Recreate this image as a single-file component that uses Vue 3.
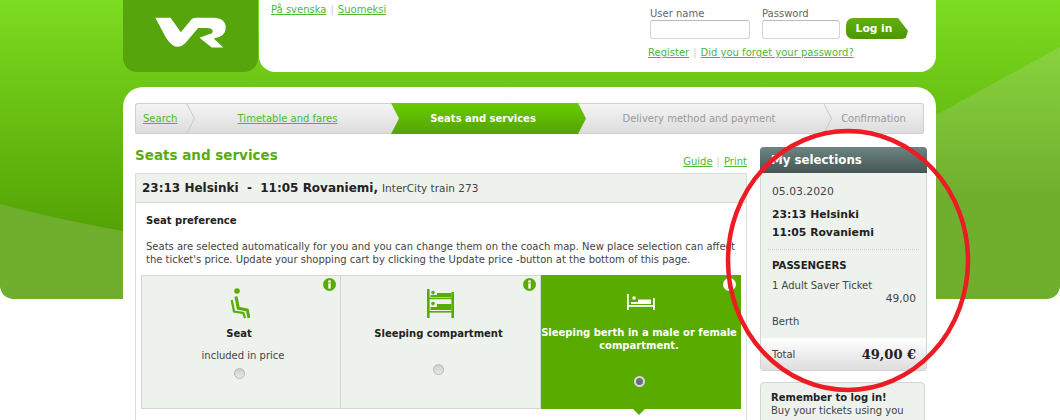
<template>
  <div class="page">
    <!-- green backdrop with the two lighter swooshes -->
    <svg class="backdrop" width="1060" height="300" viewBox="0 0 1060 300">
      <defs>
        <linearGradient id="bgGreen" x1="0" y1="0" x2="0" y2="1">
          <stop offset="0" stop-color="#7cdc20" />
          <stop offset="0.77" stop-color="#54a304" />
          <stop offset="1" stop-color="#54a304" />
        </linearGradient>
        <linearGradient id="bgLight" x1="0" y1="0" x2="0" y2="1">
          <stop offset="0" stop-color="#88d33e" />
          <stop offset="0.6" stop-color="#70ae2e" />
          <stop offset="1" stop-color="#70ae2e" />
        </linearGradient>
      </defs>
      <path d="M0 0 L1060 0 L1060 283 Q1060 299 1044 299 L16 299 Q0 299 0 283 Z" fill="url(#bgGreen)" />
      <path d="M0 204 Q60 220 123 231 L123 299 L16 299 Q0 299 0 283 Z" fill="#70ae2e" />
      <path d="M1060 47 L936 115 L936 299 L1044 299 Q1060 299 1060 283 Z" fill="url(#bgLight)" />
    </svg>

    <div class="wrap">
      <header class="top">
        <div class="logo">
          <svg width="72" height="34" viewBox="460 50 210 100">
            <path fill="#fff" d="M460 55 L505 55 L535 98 L566 60 Q570 55 580 55 L630 55 Q667 55 667 85 Q667 110 632 116 L660 143 L626 143 L590 114 L618 104 Q632 100 628 91 Q625 85 610 85 L586 85 L548 130 Q530 148 510 135 Q502 130 492 115 Z" />
          </svg>
        </div>
        <div class="topbar">
          <div class="langs">
            <a>På svenska</a><span class="sep">|</span><a>Suomeksi</a>
          </div>
          <div class="login">
            <div class="fields">
              <label class="field">
                <span>User name</span>
                <input class="user" type="text" />
              </label>
              <label class="field">
                <span>Password</span>
                <input class="pass" type="password" />
              </label>
              <button class="login-btn">Log in</button>
            </div>
            <div class="login-links">
              <a>Register</a><span class="sep">|</span><a>Did you forget your password?</a>
            </div>
          </div>
        </div>
      </header>

      <main class="panel">
        <nav class="steps">
          <div class="step s1">
            <a>Search</a>
            <svg class="chev" width="9" height="31" viewBox="0 0 9 31"><path d="M0.5 0 L8.5 15.5 L0.5 31" /></svg>
          </div>
          <div class="step s2">
            <a>Timetable and fares</a>
          </div>
          <div class="step s3">Seats and services</div>
          <div class="step s4">
            Delivery method and payment
            <svg class="chev" width="9" height="31" viewBox="0 0 9 31"><path d="M0.5 0 L8.5 15.5 L0.5 31" /></svg>
          </div>
          <div class="step s5">Confirmation</div>
        </nav>

        <div class="columns">
          <section class="content">
            <div class="title-row">
              <h2>Seats and services</h2>
              <div class="tools">
                <a>Guide</a><span class="sep">|</span><a>Print</a>
              </div>
            </div>

            <div class="train">
              <div class="train-head">
                <b>23:13 Helsinki &nbsp;-&nbsp; 11:05 Rovaniemi,</b>
                <span>InterCity train 273</span>
              </div>
              <div class="train-body">
                <h3>Seat preference</h3>
                <p>Seats are selected automatically for you and you can change them on the coach map. New place selection can affect
the ticket's price. Update your shopping cart by clicking the Update price -button at the bottom of this page.</p>
                <div class="options">
                  <div v-for="o in options" :key="o.id" class="option" :class="{ selected: o.selected }">
                    <svg class="info" width="13" height="13" viewBox="0 0 13 13">
                      <circle cx="6.5" cy="6.5" r="6.5" class="info-bg" />
                      <rect x="5.3" y="2.4" width="2.4" height="2.2" class="info-fg" />
                      <rect x="5.3" y="5.4" width="2.4" height="5.2" class="info-fg" />
                    </svg>
                    <div class="option-icon">
                      <svg v-if="o.id === 'seat'" class="seat-icon" width="22" height="32" viewBox="0 0 22 32">
                        <circle cx="9" cy="3" r="2.8" fill="#5aab00" />
                        <path d="M8 8.5 L10.3 20.3 L19.3 22 L21 30" fill="none" stroke="#5aab00" stroke-width="3" />
                        <path d="M3.7 12 L6 23.5 L15.3 25 L17 30" fill="none" stroke="#5aab00" stroke-width="2.2" />
                      </svg>
                      <svg v-else-if="o.id === 'compartment'" class="bunk-icon" width="28" height="30" viewBox="0 0 28 30">
                        <g fill="#5aab00">
                          <rect x="0" y="1" width="2.6" height="29" />
                          <rect x="24.4" y="4" width="2.6" height="26" />
                          <rect x="0" y="9.6" width="27" height="1.6" />
                          <rect x="0" y="23" width="27" height="1.6" />
                          <circle cx="6" cy="4.6" r="1.8" />
                          <circle cx="6" cy="15.6" r="1.8" />
                          <rect x="10" y="5" width="14.4" height="4" />
                          <rect x="10" y="16" width="14.4" height="6" />
                          <rect x="3.5" y="7" width="6.5" height="2" />
                          <rect x="3.5" y="19" width="6.5" height="3" />
                        </g>
                      </svg>
                      <svg v-else class="bed-icon" width="28" height="16" viewBox="0 0 28 16">
                        <g fill="#fff">
                          <rect x="0" y="0" width="1.8" height="16" />
                          <rect x="26" y="4" width="1.8" height="12" />
                          <rect x="0" y="11" width="28" height="1.8" />
                          <circle cx="7" cy="4" r="1.8" />
                          <rect x="11" y="5.5" width="13" height="4.5" />
                          <rect x="4" y="8" width="7" height="2" />
                        </g>
                      </svg>
                    </div>
                    <div class="option-name">{{ o.name }}</div>
                    <div v-if="o.note" class="option-note">{{ o.note }}</div>
                    <span class="radio"></span>
                  </div>
                </div>
              </div>
            </div>
          </section>

          <aside class="side">
            <div class="box">
              <div class="box-head">My selections</div>
              <div class="box-body">
                <div class="date">05.03.2020</div>
                <div class="route">
                  <div>23:13 Helsinki</div>
                  <div>11:05 Rovaniemi</div>
                </div>
                <div class="pass-title">PASSENGERS</div>
                <div class="ticket">1 Adult Saver Ticket</div>
                <div class="price">49,00</div>
                <div class="berth">Berth</div>
              </div>
              <div class="total">
                <span>Total</span>
                <b>49,00 €</b>
              </div>
            </div>
            <div class="reminder">
              <b>Remember to log in!</b>
              <div>Buy your tickets using you</div>
            </div>
          </aside>
        </div>
      </main>
    </div>

    <!-- hand drawn red circle on top of the screenshot -->
    <svg class="mark" width="1060" height="420" viewBox="0 0 1060 420">
      <ellipse cx="848" cy="260.5" rx="120" ry="129.5" fill="none" stroke="#ed1c24" stroke-width="4.5" />
    </svg>
  </div>
</template>

<script setup>
const options = [
  { id: 'seat', name: 'Seat', note: 'included in price' },
  { id: 'compartment', name: 'Sleeping compartment' },
  { id: 'berth', name: 'Sleeping berth in a male or female compartment.', selected: true },
]
</script>

<style>
html,
body {
  margin: 0;
  background: #fff;
  overflow: hidden;
}
</style>

<style scoped>
.page {
  position: relative;
  width: 1060px;
  height: 420px;
  overflow: hidden;
  font-family: "DejaVu Sans", Verdana, sans-serif;
  font-size: 10px;
  color: #444;
}

.backdrop {
  position: absolute;
  left: 0;
  top: 0;
}

.mark {
  position: absolute;
  left: 0;
  top: 0;
  pointer-events: none;
}

.wrap {
  position: relative;
  width: 813px;
  margin-left: 123px;
}

a {
  color: #4cb931;
  text-decoration: underline;
}

.sep {
  color: #ccc;
  margin: 0 4px;
}

/* header */
.top {
  display: flex;
  height: 72px;
}

.logo {
  width: 135px;
  height: 72px;
  box-sizing: border-box;
  padding-bottom: 6px;
  background: #56a50c;
  border-radius: 0 0 14px 14px;
  display: flex;
  align-items: center;
  justify-content: center;
}

.topbar {
  flex: 1;
  margin-left: 1px;
  background: #fff;
  border-radius: 0 0 16px 16px;
  display: flex;
  justify-content: space-between;
  padding: 3px 28px 0 12px;
}

.langs {
  line-height: 13px;
}

.login {
  padding-top: 4px;
}

.fields {
  display: flex;
  align-items: flex-end;
}

.field {
  display: flex;
  flex-direction: column;
  margin-right: 12px;
  color: #666;
  line-height: 13px;
}

.field input {
  box-sizing: border-box;
  height: 19px;
  margin: 0;
  padding: 0 3px;
  border: 1px solid #d4d4d4;
  border-top-color: #bbb;
  border-radius: 3px;
  background: #fff;
}

.user {
  width: 100px;
}

.pass {
  width: 78px;
}

.login-btn {
  width: 62px;
  height: 21px;
  margin-left: -6px;
  padding: 0 6px 0 0;
  border: 0;
  border-radius: 7px 0 6px 7px;
  background: linear-gradient(#62b010, #4c9602);
  color: #fff;
  font: bold 10.7px "DejaVu Sans", Verdana, sans-serif;
  clip-path: polygon(0 0, 84% 0, 100% 62%, 96% 100%, 0 100%);
}

.login-links {
  margin: 7px 0 0 -2px;
  line-height: 13px;
}

/* main panel */
.panel {
  margin-top: 15px;
  height: 400px;
  box-sizing: border-box;
  padding: 16px 12px 0;
  background: #fff;
  border-radius: 20px 20px 0 0;
}

.steps {
  display: flex;
  height: 31px;
  box-sizing: border-box;
  width: 789px;
  background: linear-gradient(#f5f5f5, #dcdcdc);
  box-shadow: inset 0 0 0 1px #d0d0d0;
  border-radius: 3px;
  line-height: 31px;
  color: #999;
}

.step {
  position: relative;
  box-sizing: border-box;
  text-align: center;
  white-space: nowrap;
}

.chev {
  position: absolute;
  top: 0;
  right: -9px;
}

.chev path {
  fill: none;
  stroke: #c8c8c8;
}

.s1 {
  width: 51px;
  padding-left: 8px;
  text-align: left;
}

.s2 {
  width: 205px;
  padding-right: 2px;
}

.s3 {
  width: 195px;
  margin-right: -8px;
  padding-right: 11px;
  background: linear-gradient(#68cc00, #54a304);
  color: #fff;
  font-weight: bold;
  clip-path: polygon(0 0, calc(100% - 8px) 0, 100% 50%, calc(100% - 8px) 100%, 0 100%, 8px 50%);
  z-index: 1;
}

.s4 {
  width: 245px;
  padding-right: 3px;
}

.s5 {
  flex: 1;
}

.columns {
  display: flex;
  align-items: flex-start;
}

.content {
  width: 613px;
}

.title-row {
  display: flex;
  justify-content: space-between;
  align-items: flex-end;
  height: 39px;
  box-sizing: border-box;
  padding-bottom: 5px;
}

h2 {
  margin: 0 0 4px;
  font-size: 13.5px;
  line-height: 18px;
  font-weight: bold;
  color: #5aab12;
}

.tools {
  line-height: 13px;
}

.train {
  border: 1px solid #dcdcdc;
  border-bottom: 0;
  height: 260px;
}

.train-head {
  height: 29px;
  box-sizing: border-box;
  padding-left: 6px;
  background: #edf2ed;
  border-bottom: 1px solid #d8d8d8;
  line-height: 28px;
  white-space: nowrap;
}

.train-head b {
  font-size: 12px;
  color: #222;
}

.train-head span {
  font-size: 10.5px;
  margin-left: 4px;
}

.train-body {
  padding: 0 5px;
}

h3 {
  margin: 0;
  padding: 11px 5px 0;
  font-size: 10px;
  line-height: 13px;
  color: #222;
}

p {
  margin: 0;
  padding: 13px 5px 0;
  line-height: 13px;
  white-space: pre-line;
  height: 29px;
}

.options {
  display: flex;
  margin-top: 6px;
}

.option {
  position: relative;
  width: 200px;
  height: 134px;
  box-sizing: border-box;
  border: 1px solid #d4d4d4;
  background: #edf2ed;
  display: flex;
  flex-direction: column;
  align-items: center;
  padding: 12px 4px 0 0;
  text-align: center;
}

.option-icon {
  height: 34px;
  display: flex;
  justify-content: center;
  align-items: flex-start;
}

.bunk-icon {
  margin-left: 4px;
}

.bed-icon {
  margin-left: 3px;
}

.option-name {
  margin-top: 5px;
  font-weight: bold;
  color: #222;
  line-height: 13px;
}

.option-note {
  margin: 9px 0 0 8px;
  line-height: 13px;
}

.radio {
  box-sizing: border-box;
  width: 11px;
  height: 11px;
  margin-top: 6px;
  border: 1px solid #b4b4b4;
  border-radius: 50%;
  background: linear-gradient(#d0d0d0, #e8e8e8);
}

.option:nth-child(2) {
  border-left: 0;
}

.option:nth-child(2) .radio {
  margin-top: 24px;
}

.info {
  position: absolute;
  top: 2px;
  right: 4px;
}

.info-bg {
  fill: #5aab00;
}

.info-fg {
  fill: #fff;
}

.option.selected {
  background: #5aab00;
  border: 0;
  padding: 19px 4px 0 0;
}

.option.selected::after {
  content: "";
  position: absolute;
  left: 92px;
  bottom: -6px;
  border-left: 6px solid transparent;
  border-right: 6px solid transparent;
  border-top: 6px solid #5aab00;
}

.selected .info {
  top: 3px;
  right: 5px;
}

.selected .info-bg {
  fill: #fff;
}

.selected .info-fg {
  fill: #5aab00;
}

.selected .option-icon {
  height: 27px;
}

.selected .option-name {
  color: #fff;
}

.selected .radio {
  margin-top: 24px;
  background: #6a7078;
  border: 2px solid #dcdcdc;
}

/* sidebar */
.side {
  margin-left: 13px;
  width: 167px;
  padding-top: 13px;
  flex: none;
}

.box {
  border-radius: 4px;
  border: 1px solid #d2d6d2;
  border-top: 0;
  background: #edf2ed;
}

.box-head {
  margin: 0 -1px;
  height: 26px;
  padding-left: 11px;
  border-radius: 4px 4px 0 0;
  background: linear-gradient(#6c8583, #465553);
  color: #fff;
  font-weight: bold;
  font-size: 11.8px;
  line-height: 26px;
}

.box-body {
  padding: 0 10px 0 11px;
  height: 165px;
}

.date {
  padding-top: 12px;
  line-height: 13px;
  font-size: 10.8px;
}

.route {
  margin: 8px -3px 0 -4px;
  padding: 0 0 7px 4px;
  border-bottom: 1px dotted #c8ccc8;
  font-size: 10.8px;
  font-weight: bold;
  color: #222;
  line-height: 18px;
}

.pass-title {
  margin-top: 9px;
  font-weight: bold;
  font-size: 10.2px;
  color: #222;
  line-height: 13px;
}

.ticket {
  margin-top: 7px;
  line-height: 13px;
}

.price {
  text-align: right;
  font-size: 10.6px;
  line-height: 13px;
}

.berth {
  margin-top: 10px;
  line-height: 13px;
}

.total {
  display: flex;
  justify-content: space-between;
  align-items: center;
  height: 32px;
  padding: 0 10px 0 11px;
  background: linear-gradient(#fff, #dedede);
  border-radius: 0 0 4px 4px;
}

.total b {
  font-family: "DejaVu Serif", serif;
  font-size: 13px;
  color: #222;
}

.reminder {
  margin-top: 11px;
  width: 165px;
  box-sizing: border-box;
  padding: 8px 10px;
  border: 1px solid #d2d6d2;
  border-radius: 4px;
  background: #edf2ed;
  line-height: 13px;
  white-space: nowrap;
  overflow: hidden;
}

.reminder b {
  color: #222;
}
</style>
